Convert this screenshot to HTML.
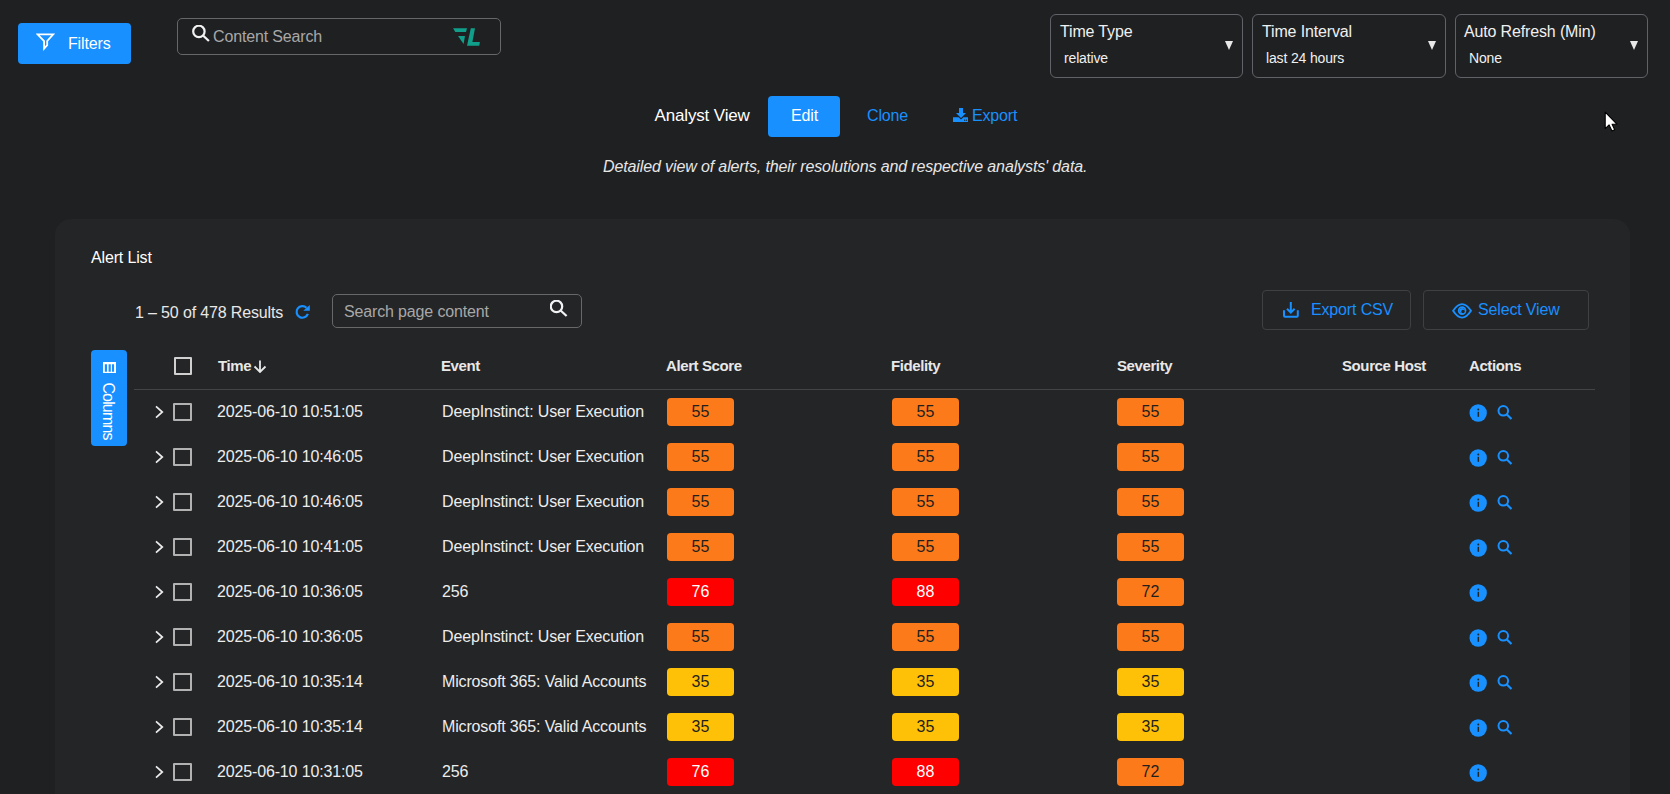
<!DOCTYPE html>
<html><head><meta charset="utf-8">
<style>
*{box-sizing:border-box;margin:0;padding:0}
html,body{width:1670px;height:794px;overflow:hidden;background:#1f2022;font-family:"Liberation Sans",sans-serif;color:#ededed}
.a{position:absolute}
.t{position:absolute;white-space:nowrap;line-height:18px;font-size:16px;letter-spacing:-0.15px}
.btnp{background:#1890ff;border-radius:4px}
.sel{border:1px solid #5f6368;border-radius:6px}
.arrow{position:absolute;width:0;height:0;border-left:4px solid transparent;border-right:4px solid transparent;border-top:9px solid #e8e8e8}
.card{left:55px;top:219px;width:1575px;height:600px;background:#242527;border-radius:16px}
.cb{position:absolute;width:19px;height:18px;border:2px solid #b2b2b2;border-radius:1px}
.chev{position:absolute}
.badge{position:absolute;width:67px;height:28px;border-radius:4px;text-align:center;line-height:28px;font-size:16px;color:#1f1f1f}
.o{background:#fd7a1a}
.y{background:#ffc107}
.r{background:#ff0000;color:#fff}
.h{font-weight:bold;font-size:15px;color:#e8e8e8;letter-spacing:-0.4px}
</style></head><body>

<!-- Filters button -->
<div class="a btnp" style="left:18px;top:23px;width:113px;height:41px"></div>
<svg class="a" style="left:36px;top:33px" width="19" height="18" viewBox="0 0 19 18"><path d="M1.5 1.3 H17.2 L11.2 8 V12.2 L8.1 15.6 V8 Z" fill="none" stroke="#fff" stroke-width="1.8" stroke-linejoin="miter"/></svg>
<div class="t" style="left:68px;top:35px;color:#fff">Filters</div>

<!-- Content search -->
<div class="a" style="left:177px;top:18px;width:324px;height:37px;border:1px solid #666766;border-radius:5px"></div>
<svg class="a" style="left:191px;top:25px" width="20" height="19" viewBox="0 0 20 19"><circle cx="7.9" cy="6.4" r="5.7" fill="none" stroke="#f2f2f2" stroke-width="2.2"/><path d="M12 10.5 L17.9 16" stroke="#f2f2f2" stroke-width="2.3"/></svg>
<div class="t" style="left:213px;top:28px;color:#a8a8a8">Content Search</div>
<svg class="a" style="left:445px;top:20px" width="45" height="32" viewBox="0 0 45 32"><path d="M8.1 8.3 H22 L21 12.1 H10.3 Z M13 15.9 H20 L18.6 23.9 Z M25.8 8.3 H30 L27.4 22 H34.9 L34.3 25.8 H22 Z" fill="#0f9f8a"/></svg>

<!-- Selects -->
<div class="a sel" style="left:1050px;top:14px;width:193px;height:64px"></div>
<div class="t" style="left:1060px;top:23px;color:#f0f0f0">Time Type</div>
<div class="t" style="left:1064px;top:49px;font-size:14px;color:#f0f0f0">relative</div>
<div class="arrow" style="left:1225px;top:41px"></div>

<div class="a sel" style="left:1252px;top:14px;width:194px;height:64px"></div>
<div class="t" style="left:1262px;top:23px;color:#f0f0f0">Time Interval</div>
<div class="t" style="left:1266px;top:49px;font-size:14px;color:#f0f0f0">last 24 hours</div>
<div class="arrow" style="left:1428px;top:41px"></div>

<div class="a sel" style="left:1455px;top:14px;width:193px;height:64px"></div>
<div class="t" style="left:1464px;top:23px;color:#f0f0f0">Auto Refresh (Min)</div>
<div class="t" style="left:1469px;top:49px;font-size:14px;color:#f0f0f0">None</div>
<div class="arrow" style="left:1630px;top:41px"></div>

<!-- cursor -->
<svg class="a" style="left:1604px;top:111px" width="15" height="22" viewBox="0 0 15 22"><path d="M1.2 1.2 V17.6 L5.1 13.9 L8 19.9 L10.7 18.7 L8.1 13.2 H12.9 Z" fill="#fff" stroke="#000" stroke-width="1.1" stroke-linejoin="round"/></svg>

<!-- Analyst view row -->
<div class="t" style="left:654.5px;top:107px;font-size:17px;color:#fff">Analyst View</div>
<div class="a btnp" style="left:768px;top:96px;width:72px;height:41px"></div>
<div class="t" style="left:791px;top:107px;color:#fff">Edit</div>
<div class="t" style="left:867px;top:107px;color:#1890ff">Clone</div>
<svg class="a" style="left:953px;top:108px" width="16" height="14" viewBox="0 0 16 14"><path d="M6 0 H10 V5 H13 L8 10 L3 5 H6 Z" fill="#1890ff"/><path d="M0 9.3 H5.6 L8 11.4 L10.4 9.3 H15 V14 H0 Z" fill="#1890ff"/><circle cx="11.6" cy="12.2" r="0.65" fill="#1f2022"/><circle cx="13.4" cy="12.2" r="0.65" fill="#1f2022"/></svg>
<div class="t" style="left:972px;top:107px;color:#1890ff">Export</div>

<div class="t" style="left:603px;top:158px;font-style:italic;color:#e6e6e6;letter-spacing:-0.12px">Detailed view of alerts, their resolutions and respective analysts' data.</div>

<!-- Card -->
<div class="a card"></div>
<div class="t" style="left:91px;top:249px;color:#fff">Alert List</div>

<div class="t" style="left:135px;top:304px;color:#e8e8e8">1 – 50 of 478 Results</div>
<svg class="a" style="left:290px;top:300px" width="24" height="24" viewBox="0 0 24 24"><path d="M16.5 7.8 A5.8 5.8 0 1 0 17.85 13.9" fill="none" stroke="#1890ff" stroke-width="2.2"/><path d="M19.8 5 V10.7 H13.3 Z" fill="#1890ff"/></svg>

<div class="a" style="left:332px;top:294px;width:250px;height:34px;border:1px solid #686868;border-radius:5px"></div>
<div class="t" style="left:344px;top:303px;color:#a8a8a8">Search page content</div>
<svg class="a" style="left:550px;top:300px" width="20" height="19" viewBox="0 0 20 19"><circle cx="6.5" cy="6.4" r="5.7" fill="none" stroke="#f2f2f2" stroke-width="2.2"/><path d="M10.6 10.5 L16.6 16" stroke="#f2f2f2" stroke-width="2.3"/></svg>

<div class="a" style="left:1262px;top:290px;width:149px;height:40px;border:1px solid #3f4042;border-radius:4px"></div>
<svg class="a" style="left:1282px;top:301px" width="17" height="18" viewBox="0 0 17 18"><path d="M8.8 1 V12 M5 7.8 L8.8 11.6 L12.6 7.8" fill="none" stroke="#1890ff" stroke-width="2"/><path d="M2 9.2 V14.8 Q2 15.8 3 15.8 H14.8 Q15.8 15.8 15.8 14.8 V9.2" fill="none" stroke="#1890ff" stroke-width="2"/></svg>
<div class="t" style="left:1311px;top:301px;color:#1890ff">Export CSV</div>

<div class="a" style="left:1423px;top:290px;width:166px;height:40px;border:1px solid #3f4042;border-radius:4px"></div>
<svg class="a" style="left:1452px;top:303px" width="21" height="16" viewBox="0 0 21 16"><path d="M1.1 7.8 Q10 -5.6 19 7.8 Q10 21.5 1.1 7.8 Z" fill="none" stroke="#1890ff" stroke-width="1.9" stroke-linejoin="round"/><circle cx="10.1" cy="7.6" r="3.4" fill="none" stroke="#1890ff" stroke-width="1.8"/><circle cx="10.1" cy="7.6" r="2.5" fill="#1890ff"/><circle cx="11" cy="8.5" r="1.7" fill="#242527"/></svg>
<div class="t" style="left:1478px;top:301px;color:#1890ff">Select View</div>

<!-- Columns button -->
<div class="a btnp" style="left:91px;top:350px;width:36px;height:96px"></div>
<svg class="a" style="left:103px;top:362px" width="13" height="11" viewBox="0 0 13 11"><path d="M0 0 H13 V11 H0 Z M1.8 2.2 V9.8 H4 V2.2 Z M5.6 2.2 V9.8 H7.8 V2.2 Z M9 2.2 V9.8 H11.1 V2.2 Z" fill="#fff" fill-rule="evenodd"/></svg>
<div class="t" style="left:77.5px;top:402px;width:60px;font-size:16px;letter-spacing:-0.85px;color:#fff;transform:rotate(90deg);transform-origin:center;text-align:center">Columns</div>

<!-- header -->
<div class="cb" style="left:174px;top:357px;width:18px;border-color:#d0d0d0"></div>
<div class="t h" style="left:218px;top:357px">Time</div>
<svg class="a" style="left:253px;top:360px" width="14" height="13" viewBox="0 0 14 13"><path d="M7 0.5 V12 M1.5 6.5 L7 12 L12.5 6.5" fill="none" stroke="#e8e8e8" stroke-width="1.8"/></svg>
<div class="t h" style="left:441px;top:357px">Event</div>
<div class="t h" style="left:666px;top:357px">Alert Score</div>
<div class="t h" style="left:891px;top:357px">Fidelity</div>
<div class="t h" style="left:1117px;top:357px">Severity</div>
<div class="t h" style="left:1342px;top:357px">Source Host</div>
<div class="t h" style="left:1469px;top:357px">Actions</div>
<div class="a" style="left:134px;top:389px;width:1461px;height:1px;background:#444"></div>

<!--ROWS-->
<svg class="a" style="left:154px;top:405px" width="10" height="14" viewBox="0 0 10 14"><path d="M2 1.3 L8.3 7 L2 12.7" fill="none" stroke="#ececec" stroke-width="1.7"/></svg>
<div class="cb" style="left:173px;top:403px"></div>
<div class="t" style="left:217px;top:403px">2025-06-10 10:51:05</div>
<div class="t" style="left:442px;top:403px">DeepInstinct: User Execution</div>
<div class="badge o" style="left:667px;top:398px">55</div>
<div class="badge o" style="left:892px;top:398px">55</div>
<div class="badge o" style="left:1117px;top:398px">55</div>
<svg class="a" style="left:1469px;top:404px" width="18" height="18" viewBox="0 0 18 18"><circle cx="9.2" cy="9" r="8.7" fill="#1890ff"/><circle cx="9.3" cy="5.5" r="0.95" fill="#242527"/><rect x="8.6" y="7.8" width="1.45" height="5" fill="#242527"/></svg>
<svg class="a" style="left:1496px;top:404px" width="18" height="18" viewBox="0 0 18 18"><circle cx="7.3" cy="6.8" r="4.8" fill="none" stroke="#1890ff" stroke-width="2"/><path d="M10.6 10.2 L15.5 15" stroke="#1890ff" stroke-width="2.2"/></svg>
<svg class="a" style="left:154px;top:450px" width="10" height="14" viewBox="0 0 10 14"><path d="M2 1.3 L8.3 7 L2 12.7" fill="none" stroke="#ececec" stroke-width="1.7"/></svg>
<div class="cb" style="left:173px;top:448px"></div>
<div class="t" style="left:217px;top:448px">2025-06-10 10:46:05</div>
<div class="t" style="left:442px;top:448px">DeepInstinct: User Execution</div>
<div class="badge o" style="left:667px;top:443px">55</div>
<div class="badge o" style="left:892px;top:443px">55</div>
<div class="badge o" style="left:1117px;top:443px">55</div>
<svg class="a" style="left:1469px;top:449px" width="18" height="18" viewBox="0 0 18 18"><circle cx="9.2" cy="9" r="8.7" fill="#1890ff"/><circle cx="9.3" cy="5.5" r="0.95" fill="#242527"/><rect x="8.6" y="7.8" width="1.45" height="5" fill="#242527"/></svg>
<svg class="a" style="left:1496px;top:449px" width="18" height="18" viewBox="0 0 18 18"><circle cx="7.3" cy="6.8" r="4.8" fill="none" stroke="#1890ff" stroke-width="2"/><path d="M10.6 10.2 L15.5 15" stroke="#1890ff" stroke-width="2.2"/></svg>
<svg class="a" style="left:154px;top:495px" width="10" height="14" viewBox="0 0 10 14"><path d="M2 1.3 L8.3 7 L2 12.7" fill="none" stroke="#ececec" stroke-width="1.7"/></svg>
<div class="cb" style="left:173px;top:493px"></div>
<div class="t" style="left:217px;top:493px">2025-06-10 10:46:05</div>
<div class="t" style="left:442px;top:493px">DeepInstinct: User Execution</div>
<div class="badge o" style="left:667px;top:488px">55</div>
<div class="badge o" style="left:892px;top:488px">55</div>
<div class="badge o" style="left:1117px;top:488px">55</div>
<svg class="a" style="left:1469px;top:494px" width="18" height="18" viewBox="0 0 18 18"><circle cx="9.2" cy="9" r="8.7" fill="#1890ff"/><circle cx="9.3" cy="5.5" r="0.95" fill="#242527"/><rect x="8.6" y="7.8" width="1.45" height="5" fill="#242527"/></svg>
<svg class="a" style="left:1496px;top:494px" width="18" height="18" viewBox="0 0 18 18"><circle cx="7.3" cy="6.8" r="4.8" fill="none" stroke="#1890ff" stroke-width="2"/><path d="M10.6 10.2 L15.5 15" stroke="#1890ff" stroke-width="2.2"/></svg>
<svg class="a" style="left:154px;top:540px" width="10" height="14" viewBox="0 0 10 14"><path d="M2 1.3 L8.3 7 L2 12.7" fill="none" stroke="#ececec" stroke-width="1.7"/></svg>
<div class="cb" style="left:173px;top:538px"></div>
<div class="t" style="left:217px;top:538px">2025-06-10 10:41:05</div>
<div class="t" style="left:442px;top:538px">DeepInstinct: User Execution</div>
<div class="badge o" style="left:667px;top:533px">55</div>
<div class="badge o" style="left:892px;top:533px">55</div>
<div class="badge o" style="left:1117px;top:533px">55</div>
<svg class="a" style="left:1469px;top:539px" width="18" height="18" viewBox="0 0 18 18"><circle cx="9.2" cy="9" r="8.7" fill="#1890ff"/><circle cx="9.3" cy="5.5" r="0.95" fill="#242527"/><rect x="8.6" y="7.8" width="1.45" height="5" fill="#242527"/></svg>
<svg class="a" style="left:1496px;top:539px" width="18" height="18" viewBox="0 0 18 18"><circle cx="7.3" cy="6.8" r="4.8" fill="none" stroke="#1890ff" stroke-width="2"/><path d="M10.6 10.2 L15.5 15" stroke="#1890ff" stroke-width="2.2"/></svg>
<svg class="a" style="left:154px;top:585px" width="10" height="14" viewBox="0 0 10 14"><path d="M2 1.3 L8.3 7 L2 12.7" fill="none" stroke="#ececec" stroke-width="1.7"/></svg>
<div class="cb" style="left:173px;top:583px"></div>
<div class="t" style="left:217px;top:583px">2025-06-10 10:36:05</div>
<div class="t" style="left:442px;top:583px">256</div>
<div class="badge r" style="left:667px;top:578px">76</div>
<div class="badge r" style="left:892px;top:578px">88</div>
<div class="badge o" style="left:1117px;top:578px">72</div>
<svg class="a" style="left:1469px;top:584px" width="18" height="18" viewBox="0 0 18 18"><circle cx="9.2" cy="9" r="8.7" fill="#1890ff"/><circle cx="9.3" cy="5.5" r="0.95" fill="#242527"/><rect x="8.6" y="7.8" width="1.45" height="5" fill="#242527"/></svg>
<svg class="a" style="left:154px;top:630px" width="10" height="14" viewBox="0 0 10 14"><path d="M2 1.3 L8.3 7 L2 12.7" fill="none" stroke="#ececec" stroke-width="1.7"/></svg>
<div class="cb" style="left:173px;top:628px"></div>
<div class="t" style="left:217px;top:628px">2025-06-10 10:36:05</div>
<div class="t" style="left:442px;top:628px">DeepInstinct: User Execution</div>
<div class="badge o" style="left:667px;top:623px">55</div>
<div class="badge o" style="left:892px;top:623px">55</div>
<div class="badge o" style="left:1117px;top:623px">55</div>
<svg class="a" style="left:1469px;top:629px" width="18" height="18" viewBox="0 0 18 18"><circle cx="9.2" cy="9" r="8.7" fill="#1890ff"/><circle cx="9.3" cy="5.5" r="0.95" fill="#242527"/><rect x="8.6" y="7.8" width="1.45" height="5" fill="#242527"/></svg>
<svg class="a" style="left:1496px;top:629px" width="18" height="18" viewBox="0 0 18 18"><circle cx="7.3" cy="6.8" r="4.8" fill="none" stroke="#1890ff" stroke-width="2"/><path d="M10.6 10.2 L15.5 15" stroke="#1890ff" stroke-width="2.2"/></svg>
<svg class="a" style="left:154px;top:675px" width="10" height="14" viewBox="0 0 10 14"><path d="M2 1.3 L8.3 7 L2 12.7" fill="none" stroke="#ececec" stroke-width="1.7"/></svg>
<div class="cb" style="left:173px;top:673px"></div>
<div class="t" style="left:217px;top:673px">2025-06-10 10:35:14</div>
<div class="t" style="left:442px;top:673px">Microsoft 365: Valid Accounts</div>
<div class="badge y" style="left:667px;top:668px">35</div>
<div class="badge y" style="left:892px;top:668px">35</div>
<div class="badge y" style="left:1117px;top:668px">35</div>
<svg class="a" style="left:1469px;top:674px" width="18" height="18" viewBox="0 0 18 18"><circle cx="9.2" cy="9" r="8.7" fill="#1890ff"/><circle cx="9.3" cy="5.5" r="0.95" fill="#242527"/><rect x="8.6" y="7.8" width="1.45" height="5" fill="#242527"/></svg>
<svg class="a" style="left:1496px;top:674px" width="18" height="18" viewBox="0 0 18 18"><circle cx="7.3" cy="6.8" r="4.8" fill="none" stroke="#1890ff" stroke-width="2"/><path d="M10.6 10.2 L15.5 15" stroke="#1890ff" stroke-width="2.2"/></svg>
<svg class="a" style="left:154px;top:720px" width="10" height="14" viewBox="0 0 10 14"><path d="M2 1.3 L8.3 7 L2 12.7" fill="none" stroke="#ececec" stroke-width="1.7"/></svg>
<div class="cb" style="left:173px;top:718px"></div>
<div class="t" style="left:217px;top:718px">2025-06-10 10:35:14</div>
<div class="t" style="left:442px;top:718px">Microsoft 365: Valid Accounts</div>
<div class="badge y" style="left:667px;top:713px">35</div>
<div class="badge y" style="left:892px;top:713px">35</div>
<div class="badge y" style="left:1117px;top:713px">35</div>
<svg class="a" style="left:1469px;top:719px" width="18" height="18" viewBox="0 0 18 18"><circle cx="9.2" cy="9" r="8.7" fill="#1890ff"/><circle cx="9.3" cy="5.5" r="0.95" fill="#242527"/><rect x="8.6" y="7.8" width="1.45" height="5" fill="#242527"/></svg>
<svg class="a" style="left:1496px;top:719px" width="18" height="18" viewBox="0 0 18 18"><circle cx="7.3" cy="6.8" r="4.8" fill="none" stroke="#1890ff" stroke-width="2"/><path d="M10.6 10.2 L15.5 15" stroke="#1890ff" stroke-width="2.2"/></svg>
<svg class="a" style="left:154px;top:765px" width="10" height="14" viewBox="0 0 10 14"><path d="M2 1.3 L8.3 7 L2 12.7" fill="none" stroke="#ececec" stroke-width="1.7"/></svg>
<div class="cb" style="left:173px;top:763px"></div>
<div class="t" style="left:217px;top:763px">2025-06-10 10:31:05</div>
<div class="t" style="left:442px;top:763px">256</div>
<div class="badge r" style="left:667px;top:758px">76</div>
<div class="badge r" style="left:892px;top:758px">88</div>
<div class="badge o" style="left:1117px;top:758px">72</div>
<svg class="a" style="left:1469px;top:764px" width="18" height="18" viewBox="0 0 18 18"><circle cx="9.2" cy="9" r="8.7" fill="#1890ff"/><circle cx="9.3" cy="5.5" r="0.95" fill="#242527"/><rect x="8.6" y="7.8" width="1.45" height="5" fill="#242527"/></svg>
<!--/ROWS-->
</body></html>
